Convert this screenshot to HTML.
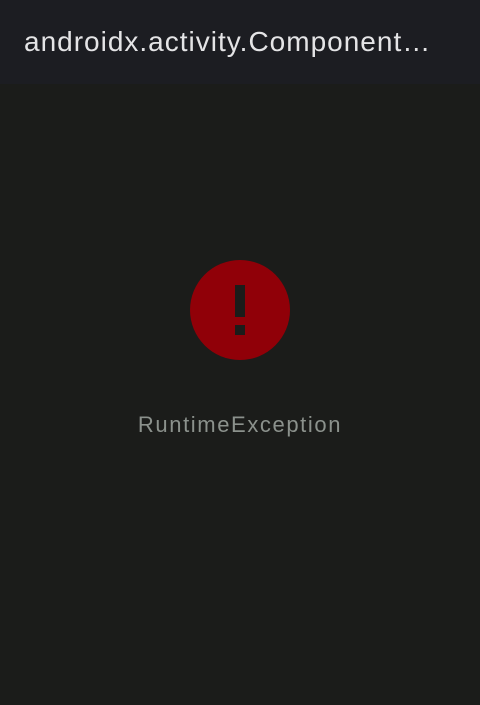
<!DOCTYPE html>
<html><head><meta charset="utf-8"><style>
html,body{margin:0;padding:0;width:480px;height:705px;background:#1b1c1a;overflow:hidden}
.bar{position:absolute;left:0;top:0;width:480px;height:84px;background:#1c1d22}
.title{position:absolute;left:24px;top:26px;font:28px "Liberation Sans",sans-serif;color:#e4e4e6;white-space:nowrap;letter-spacing:1px}
.txt{position:absolute;left:0;width:480px;top:412px;text-align:center;font:22px "Liberation Sans",sans-serif;color:#8b918c;letter-spacing:1.6px}
</style></head><body>
<div class="bar"><div class="title">androidx.activity.Component…</div></div>
<svg style="position:absolute;left:0;top:0" width="480" height="705">
<circle cx="240" cy="310" r="50" fill="#900008"/>
<rect x="235" y="285" width="10" height="32" fill="#1b1c1a"/>
<rect x="235" y="325" width="10" height="10" fill="#1b1c1a"/>
</svg>
<div class="txt">RuntimeException</div>
</body></html>
